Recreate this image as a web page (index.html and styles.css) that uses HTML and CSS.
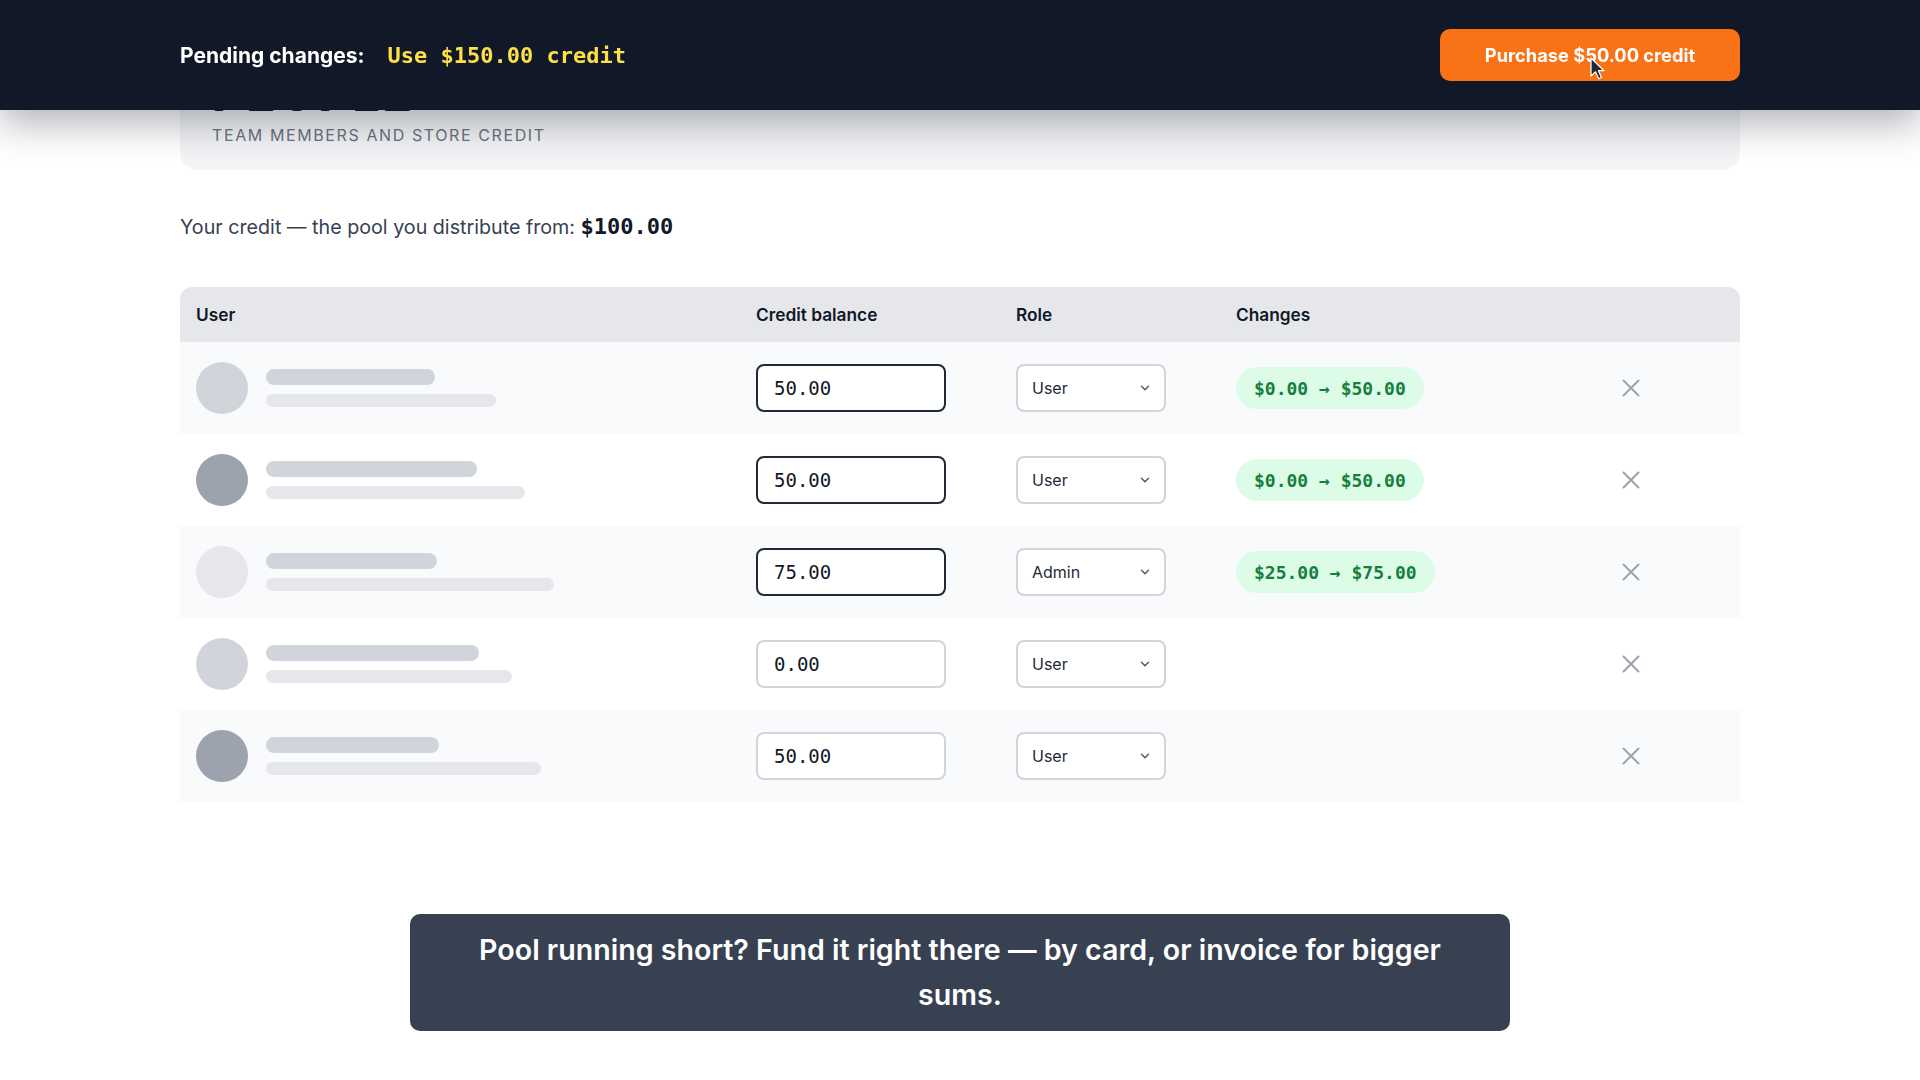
FILE: index.html
```html
<!DOCTYPE html>
<html lang="en">
<head>
<meta charset="utf-8">
<title>People</title>
<link rel="stylesheet" href="styles.css">
</head>
<body>
<header class="topbar">
  <div class="pending">
    <span class="pending-label">Pending changes:</span>
    <span class="pending-value">Use $150.00 credit</span>
  </div>
  <button class="buy-btn">Purchase $50.00 credit</button>
</header>

<main class="page">
  <section class="hero">
    <h1 class="hero-title">PEOPLE</h1>
    <p class="hero-sub">TEAM MEMBERS AND STORE CREDIT</p>
  </section>

  <p class="pool">Your credit — the pool you distribute from: <strong class="mono">$100.00</strong></p>

  <div class="table">
    <div class="thead">
      <div class="th th-user">User</div>
      <div class="th">Credit balance</div>
      <div class="th">Role</div>
      <div class="th">Changes</div>
      <div class="th"></div>
    </div>

    <div class="row row-alt">
      <div class="cell cell-user">
        <span class="avatar av-mid"></span>
        <span class="lines"><span class="l1" style="width:169px"></span><span class="l2" style="width:230px"></span></span>
      </div>
      <div class="cell"><input class="amount changed" type="text" value="50.00"></div>
      <div class="cell"><div class="select"><span>User</span><svg class="chev" width="10" height="6" viewBox="0 0 10 6"><path d="M1.5 1.2l3.5 3.5 3.5-3.5"/></svg></div></div>
      <div class="cell"><span class="pill">$0.00 → $50.00</span></div>
      <div class="cell cell-x"><svg class="xicon" width="20" height="20" viewBox="0 0 20 20"><path d="M2.5 2.5l15 15M17.5 2.5l-15 15"/></svg></div>
    </div>

    <div class="row">
      <div class="cell cell-user">
        <span class="avatar av-dark"></span>
        <span class="lines"><span class="l1" style="width:211px"></span><span class="l2" style="width:259px"></span></span>
      </div>
      <div class="cell"><input class="amount changed" type="text" value="50.00"></div>
      <div class="cell"><div class="select"><span>User</span><svg class="chev" width="10" height="6" viewBox="0 0 10 6"><path d="M1.5 1.2l3.5 3.5 3.5-3.5"/></svg></div></div>
      <div class="cell"><span class="pill">$0.00 → $50.00</span></div>
      <div class="cell cell-x"><svg class="xicon" width="20" height="20" viewBox="0 0 20 20"><path d="M2.5 2.5l15 15M17.5 2.5l-15 15"/></svg></div>
    </div>

    <div class="row row-alt">
      <div class="cell cell-user">
        <span class="avatar av-light"></span>
        <span class="lines"><span class="l1" style="width:171px"></span><span class="l2" style="width:288px"></span></span>
      </div>
      <div class="cell"><input class="amount changed" type="text" value="75.00"></div>
      <div class="cell"><div class="select"><span>Admin</span><svg class="chev" width="10" height="6" viewBox="0 0 10 6"><path d="M1.5 1.2l3.5 3.5 3.5-3.5"/></svg></div></div>
      <div class="cell"><span class="pill">$25.00 → $75.00</span></div>
      <div class="cell cell-x"><svg class="xicon" width="20" height="20" viewBox="0 0 20 20"><path d="M2.5 2.5l15 15M17.5 2.5l-15 15"/></svg></div>
    </div>

    <div class="row">
      <div class="cell cell-user">
        <span class="avatar av-mid"></span>
        <span class="lines"><span class="l1" style="width:213px"></span><span class="l2" style="width:246px"></span></span>
      </div>
      <div class="cell"><input class="amount" type="text" value="0.00"></div>
      <div class="cell"><div class="select"><span>User</span><svg class="chev" width="10" height="6" viewBox="0 0 10 6"><path d="M1.5 1.2l3.5 3.5 3.5-3.5"/></svg></div></div>
      <div class="cell"></div>
      <div class="cell cell-x"><svg class="xicon" width="20" height="20" viewBox="0 0 20 20"><path d="M2.5 2.5l15 15M17.5 2.5l-15 15"/></svg></div>
    </div>

    <div class="row row-alt">
      <div class="cell cell-user">
        <span class="avatar av-dark"></span>
        <span class="lines"><span class="l1" style="width:173px"></span><span class="l2" style="width:275px"></span></span>
      </div>
      <div class="cell"><input class="amount" type="text" value="50.00"></div>
      <div class="cell"><div class="select"><span>User</span><svg class="chev" width="10" height="6" viewBox="0 0 10 6"><path d="M1.5 1.2l3.5 3.5 3.5-3.5"/></svg></div></div>
      <div class="cell"></div>
      <div class="cell cell-x"><svg class="xicon" width="20" height="20" viewBox="0 0 20 20"><path d="M2.5 2.5l15 15M17.5 2.5l-15 15"/></svg></div>
    </div>
  </div>
</main>

<div class="caption">Pool running short? Fund it right there — by card, or invoice for bigger sums.</div>

<svg class="cursor" width="16" height="24" viewBox="0 0 16 24"><path d="M1 1v18l4.5-4.2 3.2 7 2.8-1.3-3.1-6.8H14z"/></svg>
</body>
</html>
```

FILE: styles.css
```css
* { box-sizing: border-box; }

html, body {
  margin: 0;
  padding: 0;
  background: #ffffff;
  font-family: Inter, "Noto Sans", "Liberation Sans", sans-serif;
  color: #111827;
}

.mono { font-family: "DejaVu Sans Mono", "Liberation Mono", monospace; }

.topbar {
  position: fixed;
  top: 0;
  left: 0;
  right: 0;
  height: 110px;
  padding: 0 180px;
  background: #111827;
  display: flex;
  align-items: center;
  justify-content: space-between;
  box-shadow: 0 12px 40px rgba(17, 24, 39, 0.35);
  z-index: 10;
}

.pending {
  display: flex;
  align-items: center;
  gap: 23px;
}

.pending-label {
  color: #ffffff;
  font-size: 21px;
  font-weight: 700;
}

.pending-value {
  color: #fde047;
  font-family: "DejaVu Sans Mono", "Liberation Mono", monospace;
  font-size: 22px;
  font-weight: 700;
}

.buy-btn {
  width: 300px;
  height: 52px;
  border: none;
  border-radius: 10px;
  background: #f97316;
  color: #ffffff;
  font-family: Inter, "Liberation Sans", sans-serif;
  font-size: 18.3px;
  font-weight: 700;
}

.page {
  width: 1560px;
  margin: 0 auto;
}

.hero {
  height: 170px;
  padding: 70px 32px 0;
  background: #f3f4f6;
  border-radius: 0 0 18px 18px;
}

.hero-title {
  margin: 0;
  font-size: 48px;
  line-height: 48px;
  font-weight: 800;
  letter-spacing: 0.06em;
  color: #111827;
}

.hero-sub {
  margin: 7px 0 0;
  font-size: 16px;
  line-height: 20px;
  letter-spacing: 0.1em;
  color: #6b7280;
}

.pool {
  margin: 45px 0 0;
  height: 24px;
  font-size: 19.7px;
  line-height: 24px;
  color: #374151;
}

.pool strong {
  font-size: 22px;
  line-height: 1;
  font-weight: 700;
  color: #111827;
}

.table {
  margin-top: 48px;
}

.thead,
.row {
  display: grid;
  grid-template-columns: 560px 260px 220px 302px 218px;
}

.thead {
  height: 55px;
  background: #e5e7eb;
  border-radius: 12px 12px 0 0;
  align-items: center;
}

.th {
  padding-left: 16px;
  font-size: 17.3px;
  font-weight: 600;
  color: #111827;
}

.row {
  height: 92px;
  align-items: center;
  background: #ffffff;
}

.row-alt { background: #f9fafb; }

.cell {
  padding-left: 16px;
  display: flex;
  align-items: center;
}

.cell-user { gap: 18px; }

.avatar {
  width: 52px;
  height: 52px;
  border-radius: 50%;
  flex: none;
}

.av-light { background: #e5e7eb; }
.av-mid { background: #d1d5db; }
.av-dark { background: #9ca3af; }

.lines {
  display: flex;
  flex-direction: column;
  gap: 9px;
}

.l1 {
  display: block;
  height: 16px;
  border-radius: 8px;
  background: #d1d5db;
}

.l2 {
  display: block;
  height: 13px;
  border-radius: 7px;
  background: #e5e7eb;
}

.amount {
  width: 190px;
  height: 48px;
  padding: 0 0 0 16px;
  border: 2px solid #d1d5db;
  border-radius: 8px;
  background: #ffffff;
  font-family: "DejaVu Sans Mono", "Liberation Mono", monospace;
  font-size: 19px;
  color: #111827;
  outline: none;
}

.amount.changed { border-color: #1f2937; }

.select {
  width: 150px;
  height: 48px;
  padding: 0 14px;
  border: 2px solid #d1d5db;
  border-radius: 8px;
  background: #ffffff;
  display: flex;
  align-items: center;
  justify-content: space-between;
  font-size: 16px;
  color: #1f2937;
}

.chev {
  fill: none;
  stroke: #4b5563;
  stroke-width: 1.4;
  stroke-linecap: round;
  stroke-linejoin: round;
}

.pill {
  height: 42px;
  padding: 0 18px;
  border-radius: 21px;
  background: #dcfce7;
  color: #15803d;
  font-family: "DejaVu Sans Mono", "Liberation Mono", monospace;
  font-size: 18px;
  font-weight: 700;
  display: inline-flex;
  align-items: center;
}

.cell-x {
  padding-left: 0;
  justify-content: center;
}

.xicon {
  fill: none;
  stroke: #9ca3af;
  stroke-width: 2;
  stroke-linecap: round;
}

.caption {
  position: fixed;
  left: 410px;
  bottom: 49px;
  width: 1100px;
  padding: 14px 48px;
  background: #374151;
  border-radius: 10px;
  color: #ffffff;
  text-align: center;
  font-size: 28.6px;
  line-height: 44.5px;
  font-weight: 600;
}

.cursor {
  position: fixed;
  left: 1590px;
  top: 57px;
  z-index: 20;
  fill: #1f2937;
  stroke: #ffffff;
  stroke-width: 1.2;
  stroke-linejoin: round;
}
```
